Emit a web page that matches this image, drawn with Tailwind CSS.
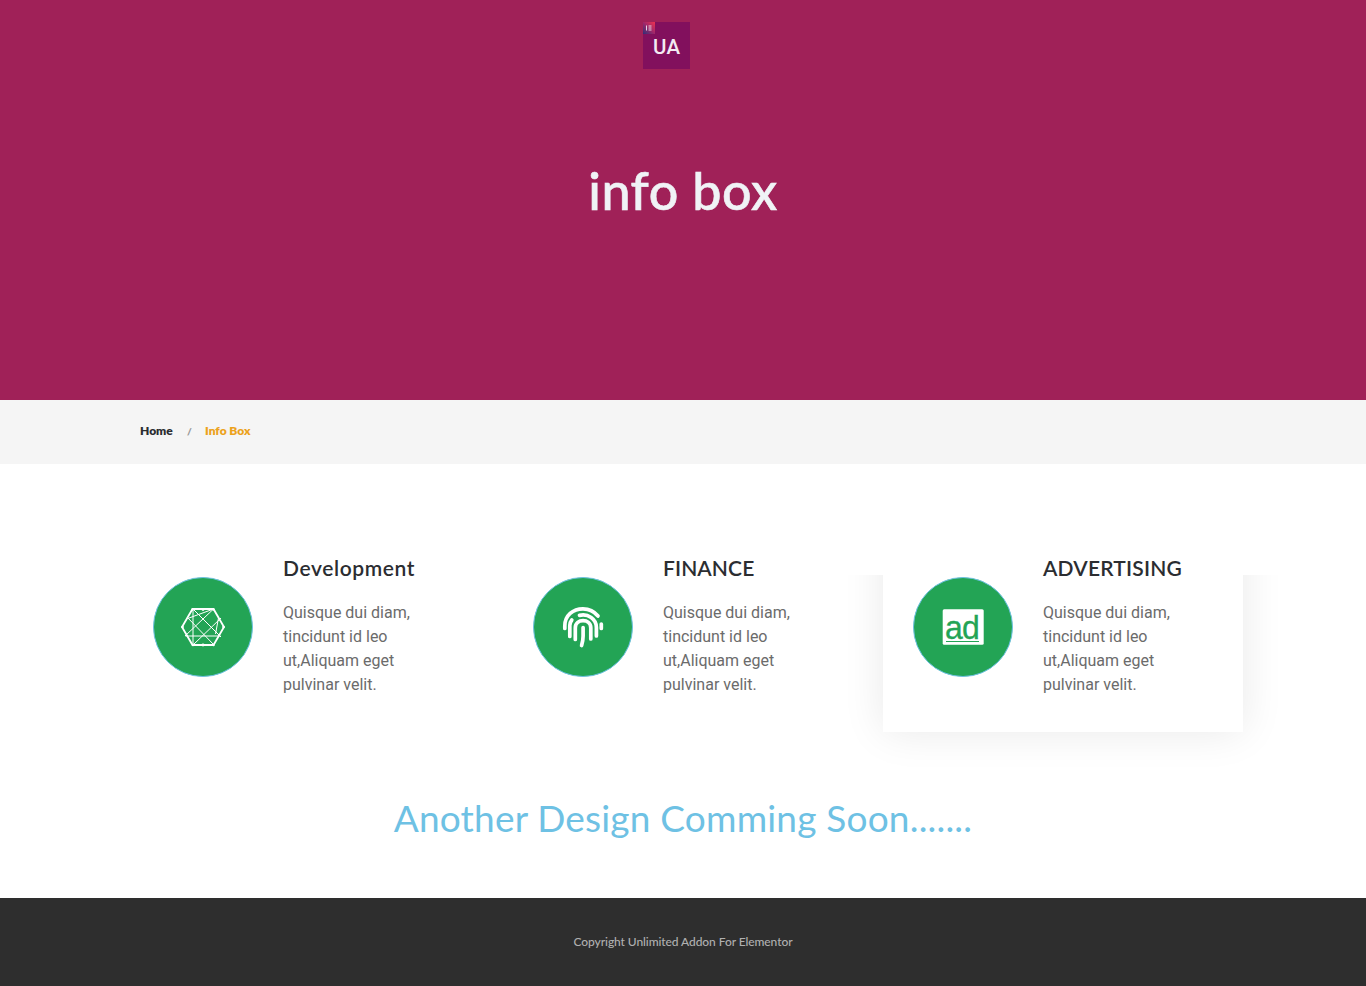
<!DOCTYPE html>
<html lang="en">
<head>
<meta charset="utf-8">
<title>Info Box</title>
<script src="https://cdn.jsdelivr.net/npm/@tailwindcss/browser@4"></script>
</head>
<body class="bg-white font-['Roboto',sans-serif]">
<header class="flex h-[400px] flex-col items-center bg-[#a02158] pt-[22px]">
  <svg class="mr-[33px] size-[47px]" viewBox="0 0 47 47">
    <defs><linearGradient id="tag" x1="0" y1="1" x2="1" y2="0"><stop offset="0" stop-color="#2b2f78"/><stop offset=".5" stop-color="#a0286a"/><stop offset="1" stop-color="#f0314f"/></linearGradient></defs>
    <rect width="47" height="47" fill="#82105d"/>
    <rect width="12" height="12" fill="url(#tag)"/>
    <path d="M3.500 3.500v5M5.500 4H8.500M5.500 6H8.500M5.500 8H8.500" stroke="#e8d5e5" stroke-width="1"/>
    <text x="10" y="32" font-family="Roboto" font-weight="500" font-size="20.500" fill="#f3eaf3" textLength="27">UA</text>
  </svg>
  <h1 class="mt-[89px] text-[52px] leading-[64px] font-medium tracking-[0.5px] text-[#f0f3f6] font-['Lato',sans-serif] [-webkit-text-stroke:0.6px_#f0f3f6]">info box</h1>
</header>
<nav class="flex h-16 items-center bg-[#f5f5f5] pb-[2px] pl-[140px] text-xs font-extrabold font-['Lato',sans-serif]">
  <a class="w-[47px] text-[#2b2d31]">Home</a><span class="w-[18px] pt-[2px] text-[10px] text-[#999]">/</span><a class="text-[#eca21c]">Info Box</a>
</nav>
<main class="h-[434px]">
  <section class="flex gap-5 pl-[123px]">
    <article class="flex h-[268px] w-[360px] gap-[30px] pl-[30px]">
      <div class="mt-[113px] flex size-[100px] shrink-0 items-center justify-center rounded-full border border-[#6ec1e4] bg-[#23a455]">
        <svg class="size-[60px]" viewBox="0 0 60 60" fill="none" stroke="#fff"><path d="M19.500 12h21l10.500 18-10.500 18h-21l-10.500-18z" stroke-width="1.800"/><path d="M20 12v36M20 12l28 28M40.500 12 12 39M40.500 12 16 21M48 21 20 48M14 20l27 28M12.500 39h35M45.500 21l-3 16" stroke-width="1"/><g fill="#fff" stroke="none"><circle cx="19.500" cy="12.500" r="1.200"/><circle cx="30" cy="12.500" r="1.400"/><circle cx="40.500" cy="12.500" r="1.200"/><circle cx="9.500" cy="30" r="1.300"/><circle cx="50.500" cy="30" r="1.300"/><circle cx="20" cy="48" r="1.200"/><circle cx="30" cy="48" r="1.400"/><circle cx="40.500" cy="48" r="1.200"/></g></svg>
      </div>
      <div class="w-[140px] pt-[91px]">
        <h3 class="text-[21px] leading-[26px] font-semibold tracking-[0.6px] whitespace-nowrap text-[#2b2d31] font-['Lato',sans-serif]">Development</h3>
        <p class="mt-5 text-base leading-6 text-[#6b6b6b]">Quisque dui diam,<br>tincidunt id leo<br>ut,Aliquam eget<br>pulvinar velit.</p>
      </div>
    </article>
    <article class="flex h-[268px] w-[360px] gap-[30px] pl-[30px]">
      <div class="mt-[113px] flex size-[100px] shrink-0 items-center justify-center rounded-full border border-[#6ec1e4] bg-[#23a455]">
        <svg class="size-[60px]" viewBox="0 0 60 60" fill="none" stroke="#fff" stroke-width="3.700" stroke-linecap="round"><path d="M11.800 31.500V29C11.800 18.500 20 11.800 30 11.800c6 0 11.500 2.800 15 7.200M48.300 27v4.500M16.800 39.500V28.500c0-2 .8-4 2-5.500M26.500 18.400c8.500-2 16.900 3.500 16.900 12.100v8.500M22.300 42.500V31c0-9.800 15.500-9.800 15.500 0v11M30.100 30.500v8.500q0 4.500-1.500 9.500"/></svg>
      </div>
      <div class="w-[140px] pt-[91px]">
        <h3 class="text-[21px] leading-[26px] font-semibold tracking-[0.1px] whitespace-nowrap text-[#2b2d31] font-['Lato',sans-serif]">FINANCE</h3>
        <p class="mt-5 text-base leading-6 text-[#6b6b6b]">Quisque dui diam,<br>tincidunt id leo<br>ut,Aliquam eget<br>pulvinar velit.</p>
      </div>
    </article>
    <article class="relative flex h-[268px] w-[360px] gap-[30px] pl-[30px]">
      <div class="absolute inset-0 shadow-[0_0_40px_rgba(0,0,0,0.09)] [clip-path:inset(111px_-60px_-60px_-60px)]"></div>
      <div class="mt-[113px] flex size-[100px] shrink-0 items-center justify-center rounded-full border border-[#6ec1e4] bg-[#23a455]">
        <svg class="size-[60px]" viewBox="0 0 60 60"><rect x="9.700" y="12.200" width="41" height="35.600" rx="1.500" fill="#fff"/><text transform="translate(12 41.800) scale(.94 1)" font-family="Liberation Sans" font-size="34" fill="#23a455" stroke="#23a455" stroke-width=".3" textLength="37">ad</text><path d="M13 44.500h33" stroke="#23a455"/></svg>
      </div>
      <div class="w-[140px] pt-[91px]">
        <h3 class="text-[21px] leading-[26px] font-semibold tracking-[0.2px] whitespace-nowrap text-[#2b2d31] font-['Lato',sans-serif]">ADVERTISING</h3>
        <p class="mt-5 text-base leading-6 text-[#6b6b6b]">Quisque dui diam,<br>tincidunt id leo<br>ut,Aliquam eget<br>pulvinar velit.</p>
      </div>
    </article>
  </section>
  <h2 class="mt-[63px] text-center text-[37px] leading-[46px] tracking-[0.2px] text-[#6ec1e4] font-['Lato',sans-serif]">Another Design Comming Soon.......</h2>
</main>
<footer class="flex h-[88px] items-center justify-center bg-[#2e2e2e] text-xs font-medium tracking-[-0.08px] text-[#b0b0b0] font-['Lato',sans-serif]">Copyright Unlimited Addon For Elementor</footer>
</body>
</html>
